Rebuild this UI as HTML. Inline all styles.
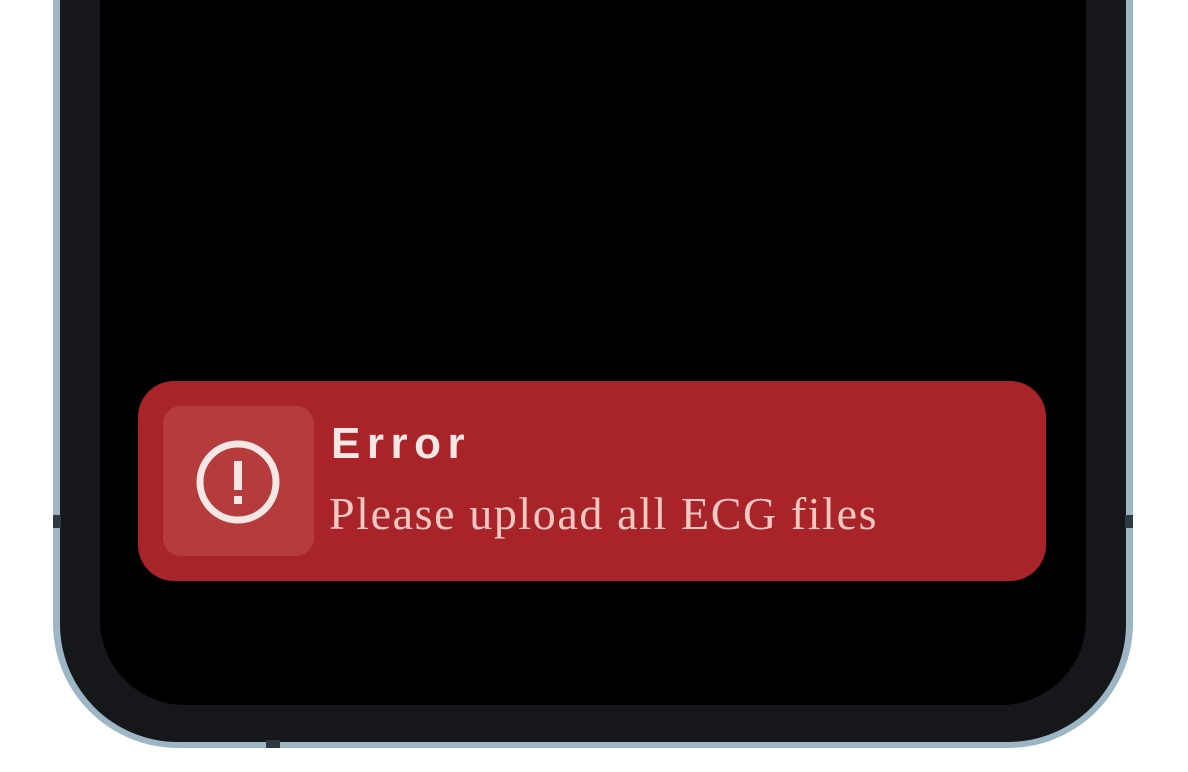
<!DOCTYPE html>
<html><head><style>
html,body{margin:0;width:1188px;height:772px;background:#fff;overflow:hidden;position:relative;font-family:"Liberation Sans",sans-serif}
.frame{position:absolute;left:53px;top:-120px;width:1080px;height:868px;background:#9db6c6;border-radius:0 0 125px 125px}
.bezel{position:absolute;left:60px;top:-120px;width:1066px;height:862px;background:#16171a;border-radius:0 0 118px 118px}
.screen{position:absolute;left:100px;top:-120px;width:986px;height:825px;background:#000;border-radius:0 0 85px 85px}
.mark{position:absolute;background:#2e3a42}
.toast{position:absolute;left:138px;top:381px;width:908px;height:200px;background:#a92429;border-radius:36px}
.ib{position:absolute;left:25px;top:25px;width:151px;height:150px;background:#b53b3d;border-radius:18px}
.t1{position:absolute;left:193px;top:38px;font-weight:bold;font-size:44px;letter-spacing:6.5px;color:#f6e6e4}
.t2{position:absolute;left:191px;top:106px;font-family:"Liberation Serif",serif;font-size:46px;letter-spacing:1.6px;color:#f3c7c2}
</style></head><body>
<div class="frame"></div>
<div class="bezel"></div>
<div class="mark" style="left:53px;top:515px;width:8px;height:13px"></div>
<div class="mark" style="left:1125px;top:515px;width:8px;height:13px"></div>
<div class="mark" style="left:266px;top:740px;width:14px;height:8px"></div>
<div class="screen"></div>
<div class="toast">
<div class="ib"><svg width="151" height="150" viewBox="0 0 151 150"><circle cx="75" cy="76" r="38" fill="none" stroke="#f6e6e4" stroke-width="7"/><rect x="71" y="55" width="8" height="29" fill="#f6e6e4"/><rect x="71" y="90" width="8" height="8" fill="#f6e6e4"/></svg></div>
<div class="t1">Error</div>
<div class="t2">Please upload all ECG files</div>
</div>
</body></html>
